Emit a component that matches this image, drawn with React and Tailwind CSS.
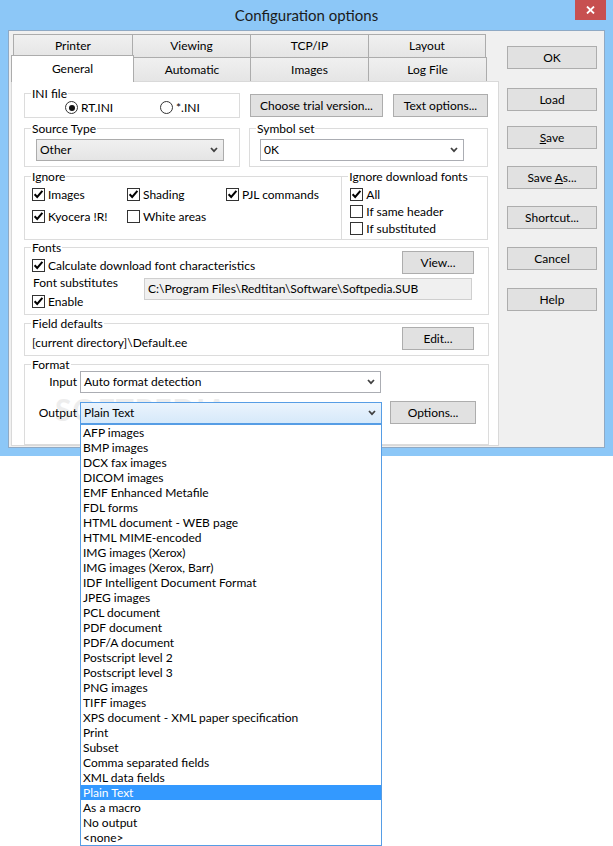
import React from 'react';

const formats = [
  'AFP images', 'BMP images', 'DCX fax images', 'DICOM images', 'EMF Enhanced Metafile',
  'FDL forms', 'HTML document - WEB page', 'HTML MIME-encoded', 'IMG images (Xerox)',
  'IMG images (Xerox, Barr)', 'IDF Intelligent Document Format', 'JPEG images', 'PCL document',
  'PDF document', 'PDF/A document', 'Postscript level 2', 'Postscript level 3', 'PNG images',
  'TIFF images', 'XPS document - XML paper specification', 'Print', 'Subset',
  'Comma separated fields', 'XML data fields', 'Plain Text', 'As a macro', 'No output', '<none>',
];

const Chevron = () => (
  <svg width="8" height="6" viewBox="0 0 8 6" className="shrink-0">
    <path d="M1 1 L4 4.2 L7 1" fill="none" stroke="#404040" strokeWidth="1.7" />
  </svg>
);

const Check = ({ checked, label, className = '' }) => (
  <div className={`flex items-center h-[13px] ${className}`}>
    <span className="w-[13px] h-[13px] border border-[#333] bg-white flex items-center justify-center shrink-0">
      {checked && (
        <svg width="11" height="11" viewBox="0 0 11 11">
          <path d="M1.6 5.2 L4.2 8 L9.4 1.8" fill="none" stroke="#000" strokeWidth="2" />
        </svg>
      )}
    </span>
    <span className="ml-[3px] leading-[15px] whitespace-nowrap">{label}</span>
  </div>
);

const Radio = ({ checked, label, className = '' }) => (
  <div className={`flex items-center h-[13px] ${className}`}>
    <span className="w-[13px] h-[13px] rounded-full border border-[#333] bg-white flex items-center justify-center shrink-0">
      {checked && <span className="w-[6px] h-[6px] rounded-full bg-[#111]" />}
    </span>
    <span className="ml-[3px] leading-[15px]">{label}</span>
  </div>
);

const Btn = ({ children, className = '' }) => (
  <div className={`h-[23px] flex items-center justify-center border border-[#adadad] bg-[#e1e1e1] leading-[15px] ${className}`}>
    {children}
  </div>
);

const Group = ({ label, className = '', children }) => (
  <fieldset className={`border border-[#dcdcdc] px-[6px] min-w-0 ${className}`}>
    <legend className="px-[1px] leading-[15px]">{label}</legend>
    {children}
  </fieldset>
);

const Tab = ({ children, className = '' }) => (
  <div className={`h-[24px] flex items-center justify-center border border-[#acacac] bg-gradient-to-b from-[#f0f0f0] to-[#e5e5e5] ${className}`}>
    {children}
  </div>
);

export default function App() {
  return (
    <div className="w-[613px] h-[846px] bg-white text-[12px] text-black font-['Lato','Noto_Sans',sans-serif]">
      <div className="w-[613px] bg-[#8cc7f7] px-[8px] pb-[8px]">
        {/* title bar */}
        <div className="h-[30px] flex items-center justify-center relative">
          <span className="text-[15px] text-[#1b1b1b] mt-[1px]">Configuration options</span>
          <div className="absolute top-0 right-[-1px] w-[31px] h-[20px] bg-[#c75050] flex items-center justify-center">
            <svg width="9" height="8" viewBox="0 0 9 8">
              <path d="M1 0.5 L8 7.5 M8 0.5 L1 7.5" stroke="#fff" strokeWidth="1.8" />
            </svg>
          </div>
        </div>

        {/* client */}
        <div className="h-[418px] bg-[#f0f0f0] border border-[#8fa9c4] flex">
          <div className="w-[490px] pl-[2px]">
            {/* tabs */}
            <div className="flex pl-[2px] mt-[3px]">
              <Tab className="w-[120px]">Printer</Tab>
              <Tab className="w-[119px] -ml-px">Viewing</Tab>
              <Tab className="w-[119px] -ml-px">TCP/IP</Tab>
              <Tab className="w-[118px] -ml-px">Layout</Tab>
            </div>
            <div className="flex items-end h-[24px] -mt-px">
              <div className="relative z-10 w-[123px] h-[27px] -mb-px bg-white border border-b-0 border-[#acacac] flex items-start justify-center pt-[4px]">
                General
              </div>
              <Tab className="w-[118px] -ml-px border-b-0">Automatic</Tab>
              <Tab className="w-[119px] -ml-px border-b-0">Images</Tab>
              <Tab className="w-[119px] -ml-px border-b-0">Log File</Tab>
            </div>

            {/* panel */}
            <div className="w-[488px] h-[365px] bg-white border border-[#d9d9d9] pl-[12px] pr-[10px] pt-[4px]">
              <div className="flex">
                <Group label="INI file" className="w-[216px] h-[32px]">
                  <div className="flex">
                    <Radio checked label="RT.INI" className="ml-[34px] w-[95px]" />
                    <Radio label="*.INI" />
                  </div>
                </Group>
                <Btn className="w-[133px] ml-[10px] mt-[8px]">Choose trial version...</Btn>
                <Btn className="w-[95px] ml-[10px] mt-[8px]">Text options...</Btn>
              </div>

              <div className="flex mt-[3px]">
                <Group label="Source Type" className="w-[216px] h-[46px]">
                  <div className="ml-[5px] mt-[3px] w-[188px] h-[22px] flex items-center border border-[#acacac] bg-gradient-to-b from-[#f0f0f0] to-[#e5e5e5] pl-[3px] pr-[5px]">
                    <span className="flex-1">Other</span>
                    <Chevron />
                  </div>
                </Group>
                <Group label="Symbol set" className="w-[239px] h-[46px] ml-[9px]">
                  <div className="ml-[4px] mt-[3px] w-[204px] h-[22px] flex items-center border border-[#abadb3] bg-white pl-[3px] pr-[5px]">
                    <span className="flex-1">0K</span>
                    <Chevron />
                  </div>
                </Group>
              </div>

              <div className="flex mt-[2px]">
                <Group label="Ignore" className="w-[319px] h-[71px]">
                  <div className="flex mt-[4px] ml-[1px]">
                    <Check checked label="Images" className="w-[95px]" />
                    <Check checked label="Shading" className="w-[99px]" />
                    <Check checked label="PJL commands" />
                  </div>
                  <div className="flex mt-[9px] ml-[1px]">
                    <Check checked label="Kyocera !R!" className="w-[95px]" />
                    <Check label="White areas" />
                  </div>
                </Group>
                <Group label="Ignore download fonts" className="w-[147px] h-[71px] -ml-px">
                  <Check checked label="All" className="mt-[4px] ml-[2px]" />
                  <Check label="If same header" className="mt-[4px] ml-[2px]" />
                  <Check label="If substituted" className="mt-[4px] ml-[2px]" />
                </Group>
              </div>

              <Group label="Fonts" className="w-[465px] h-[75px]">
                <div className="flex items-start justify-between -mt-[4px] h-[22px] pr-[8px]">
                  <Check checked label="Calculate download font characteristics" className="mt-[8px] ml-[1px]" />
                  <Btn className="w-[72px] h-[21px]">View...</Btn>
                </div>
                <div className="flex">
                  <div className="w-[113px]">
                    <div className="leading-[15px] mt-[2px] ml-[2px]">Font substitutes</div>
                    <Check checked label="Enable" className="mt-[5px] ml-[1px]" />
                  </div>
                  <div className="w-[328px] h-[22px] mt-[5px] border border-[#cfcfcf] bg-[#f0f0f0] flex items-center pl-[3px]">
                    C:\Program Files\Redtitan\Software\Softpedia.SUB
                  </div>
                </div>
              </Group>

              <Group label="Field defaults" className="w-[465px] h-[40px] mt-px">
                <div className="flex items-start justify-between -mt-[4px] pr-[8px]">
                  <span className="mt-[8px] ml-[1px] leading-[15px]">[current directory]\Default.ee</span>
                  <Btn className="w-[72px] h-[21px]">Edit...</Btn>
                </div>
              </Group>

              <Group label="Format" className="w-[465px] h-[88px] mt-px relative">
                <div className="absolute left-[30px] top-[22px] text-[30px] font-bold tracking-[1px] text-[#ededed] leading-none select-none">
                  SOFTPEDIA
                </div>
                <div className="relative flex items-center -mt-[1px]">
                  <span className="w-[46px] text-right">Input</span>
                  <div className="ml-[3px] w-[301px] h-[22px] flex items-center border border-[#abadb3] bg-white pl-[3px] pr-[5px]">
                    <span className="flex-1">Auto format detection</span>
                    <Chevron />
                  </div>
                </div>
                <div className="relative flex items-center mt-[8px]">
                  <span className="w-[46px] text-right">Output</span>
                  <div className="ml-[3px] w-[302px] h-[22px] relative z-20">
                    <div className="h-[22px] flex items-center border border-[#569de5] bg-gradient-to-b from-[#ebf4fd] to-[#d6e9fa] pl-[3px] pr-[5px]">
                      <span className="flex-1">Plain Text</span>
                      <Chevron />
                    </div>
                    <div className="absolute top-full left-0 w-[302px] border border-[#569de5] bg-white">
                      {formats.map((f) => (
                        <div
                          key={f}
                          className={`h-[15px] leading-[15px] pl-[2px] whitespace-nowrap ${f === 'Plain Text' ? 'bg-[#3399ff] text-white' : ''}`}
                        >
                          {f}
                        </div>
                      ))}
                    </div>
                  </div>
                  <Btn className="w-[86px] h-[22px] ml-[8px]">Options...</Btn>
                </div>
              </Group>
            </div>
          </div>

          {/* right buttons */}
          <div className="ml-[8px] w-[90px] pt-[15px]">
            <Btn className="border-[#3399ff]">OK</Btn>
            <Btn className="mt-[19px]">Load</Btn>
            <Btn className="mt-[15px]"><span><span className="underline">S</span>ave</span></Btn>
            <Btn className="mt-[17px]"><span>Save <span className="underline">A</span>s...</span></Btn>
            <Btn className="mt-[17px]">Shortcut...</Btn>
            <Btn className="mt-[18px]">Cancel</Btn>
            <Btn className="mt-[18px]">Help</Btn>
          </div>
        </div>
      </div>
    </div>
  );
}
